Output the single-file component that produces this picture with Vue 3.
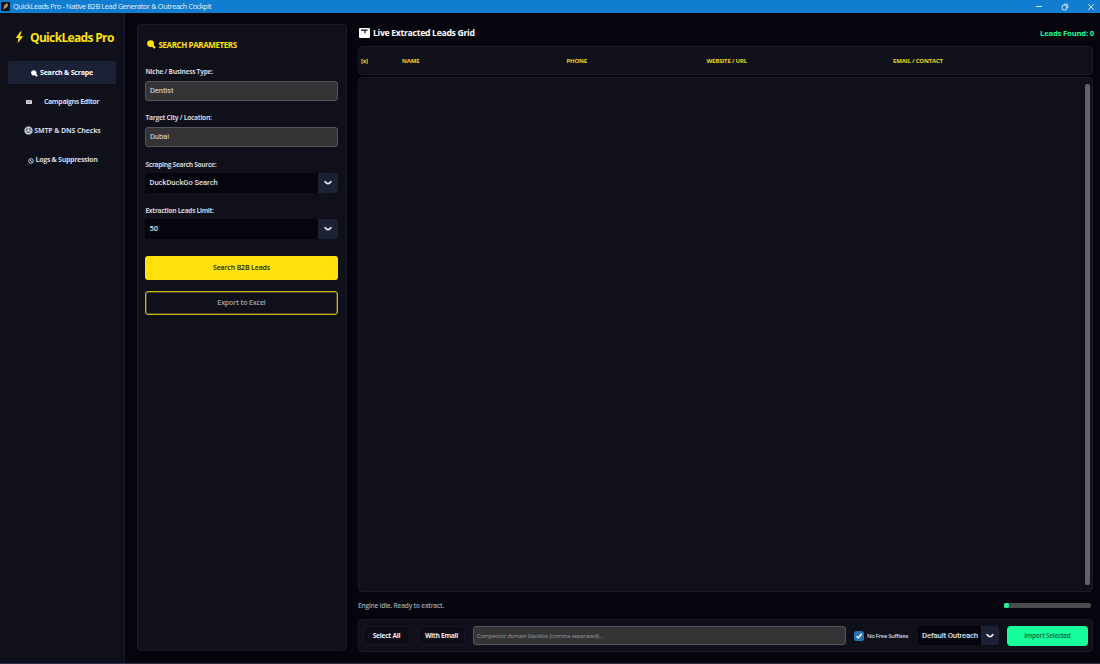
<template>
  <div class="window">
    <header class="titlebar">
      <svg class="app-icon" viewBox="0 0 9 9">
        <rect width="9" height="9" fill="#15130f" />
        <path d="M2.2 7.4 3.2 3.4 5 1.6l2 .2-.4 3-2 1.2z" fill="#a99568" />
      </svg>
      <span class="titlebar-text">QuickLeads Pro - Native B2B Lead Generator &amp; Outreach Cockpit</span>
      <div class="window-controls">
        <svg viewBox="0 0 8 8"><path d="M1 3.5h6" /></svg>
        <svg viewBox="0 0 8 8">
          <rect x="1.2" y="2.2" width="4.4" height="4.6" rx="1" />
          <path d="M2.8 2.2V1.9q0-.8.8-.8h2q1.3 0 1.3 1.3v1.9q0 .8-.8.8h-.5" />
        </svg>
        <svg viewBox="0 0 8 8"><path d="M1.2 1.2l5.6 5.6M6.8 1.2L1.2 6.8" /></svg>
      </div>
    </header>

    <div class="body">
      <aside class="sidebar">
        <div class="brand">
          <svg class="bolt" viewBox="0 0 9 13">
            <path d="M5.3.6.8 7h2.7L2.6 12.3 8.3 5.2H5.1L6.6.6z" fill="#ffe00f" />
          </svg>
          <span>QuickLeads Pro</span>
        </div>
        <nav class="nav">
          <button
            v-for="item in navItems"
            :key="item.id"
            class="nav-item"
            :class="[item.id, { active: activeTab === item.id }]"
            @click="activeTab = item.id"
          >
            <svg v-if="item.id === 'search'" class="icon-lens" viewBox="0 0 10 10">
              <circle cx="4" cy="4" r="3.8" />
              <path d="M6.4 4.6 9.7 8 8.2 9.8 4.6 6.8z" />
            </svg>
            <svg v-else-if="item.id === 'campaigns'" class="icon-mail" viewBox="0 0 6 4">
              <rect width="6" height="4" rx=".4" fill="#d3d5dd" />
              <path d="M1 1l2 1.2L5 1" fill="none" stroke="#686b78" stroke-width=".6" />
            </svg>
            <svg v-else-if="item.id === 'smtp'" class="icon-gear" viewBox="0 0 10 10">
              <circle cx="5" cy="5" r="3.7" fill="#777b86" stroke="#c9ccd5" stroke-width="1.2" />
              <circle cx="5" cy="5" r="4.3" fill="none" stroke="#d6d8df" stroke-width=".9" stroke-dasharray="1.3 .95" />
              <path d="M5 1.5V4M2 6.8 4 5.6M8 6.8 6 5.6" stroke="#d6d8df" stroke-width=".8" />
              <circle cx="5" cy="5" r="1" fill="#f0f1f5" />
            </svg>
            <svg v-else class="icon-ban" viewBox="0 0 6 6">
              <circle cx="3" cy="3" r="2.3" />
              <path d="M1.4 1.4l3.2 3.2" />
            </svg>
            <span>{{ item.label }}</span>
          </button>
        </nav>
      </aside>

      <section class="params">
        <h2 class="params-title">
          <svg class="icon-lens" viewBox="0 0 10 10">
            <circle cx="4" cy="4" r="3.8" />
            <path d="M6.4 4.6 9.7 8 8.2 9.8 4.6 6.8z" />
          </svg>
          <span>SEARCH PARAMETERS</span>
        </h2>

        <label class="field niche">
          <span>Niche / Business Type:</span>
          <input v-model="niche" type="text" />
        </label>
        <label class="field city">
          <span>Target City / Location:</span>
          <input v-model="city" type="text" />
        </label>
        <div class="field source">
          <span>Scraping Search Source:</span>
          <div class="combo">
            <span class="combo-value">{{ source }}</span>
            <span class="combo-arrow"><svg viewBox="0 0 8 6"><path d="M1.2 1.7Q4 5.5 6.8 1.7" /></svg></span>
          </div>
        </div>
        <div class="field limit">
          <span>Extraction Leads Limit:</span>
          <div class="combo">
            <span class="combo-value">{{ limit }}</span>
            <span class="combo-arrow"><svg viewBox="0 0 8 6"><path d="M1.2 1.7Q4 5.5 6.8 1.7" /></svg></span>
          </div>
        </div>

        <button class="btn-search">Search B2B Leads</button>
        <button class="btn-export">Export to Excel</button>
      </section>

      <main class="main">
        <div class="main-head">
          <svg class="grid-icon" viewBox="0 0 11 10">
            <rect width="11" height="10" rx="1.2" fill="#fff" />
            <path d="M2 1.6h6.6v1.1H6.6v2.6H5.4V2.7H2z" fill="#14131c" />
          </svg>
          <h1>Live Extracted Leads Grid</h1>
          <span class="leads-found">Leads Found: {{ leads.length }}</span>
        </div>

        <div class="grid-header">
          <span v-for="col in columns" :key="col">{{ col }}</span>
        </div>
        <div class="grid-body">
          <div class="scrollbar"></div>
        </div>

        <div class="status">
          <span>Engine idle. Ready to extract.</span>
          <div class="progress">
            <div class="progress-fill" :style="{ width: progress + '%' }"></div>
          </div>
        </div>

        <footer class="actions">
          <button class="btn-dark all">Select All</button>
          <button class="btn-dark email">With Email</button>
          <input class="blacklist" type="text" placeholder="Competitor domain blacklist (comma separated)..." />
          <div class="check" @click="noFree = !noFree">
            <svg viewBox="0 0 10 10">
              <rect width="10" height="10" rx="2.8" fill="#2474b4" />
              <path v-if="noFree" d="M2.5 5.2 4.3 7 7.7 2.8" fill="none" stroke="#fff" stroke-width="1.4" />
            </svg>
            <span>No Free Suffixes</span>
          </div>
          <div class="combo template">
            <span class="combo-value">Default Outreach</span>
            <span class="combo-arrow"><svg viewBox="0 0 8 6"><path d="M1.2 1.7Q4 5.5 6.8 1.7" /></svg></span>
          </div>
          <button class="btn-import">Import Selected</button>
        </footer>
      </main>
    </div>
  </div>
</template>

<script setup>
import { ref } from 'vue'

const navItems = [
  { id: 'search', label: 'Search & Scrape' },
  { id: 'campaigns', label: 'Campaigns Editor' },
  { id: 'smtp', label: 'SMTP & DNS Checks' },
  { id: 'logs', label: 'Logs & Suppression' }
]
const columns = ['[x]', 'NAME', 'PHONE', 'WEBSITE / URL', 'EMAIL / CONTACT']

const activeTab = ref('search')
const niche = ref('Dentist')
const city = ref('Dubai')
const source = ref('DuckDuckGo Search')
const limit = ref('50')
const leads = ref([])
const progress = ref(6)
const noFree = ref(true)
</script>

<style>
body {
  background: #06050d;
}
</style>

<style scoped>
* {
  box-sizing: border-box;
}

.window {
  width: 1100px;
  height: 664px;
  display: flex;
  flex-direction: column;
  background: #06050d;
  border-bottom: 1px solid #27324a;
  font-family: "Open Sans", "Noto Sans", sans-serif;
  color: #dfe1ea;
  overflow: hidden;
  white-space: nowrap;
}

button,
input {
  font-family: inherit;
  margin: 0;
  padding: 0;
  border: none;
  outline: none;
}

svg {
  display: block;
  flex: none;
}

.titlebar {
  flex: none;
  height: 13px;
  display: flex;
  align-items: center;
  background: #107dd1;
}

.app-icon {
  width: 9px;
  height: 9px;
  margin-left: 1px;
}

.titlebar-text {
  margin-left: 3px;
  font-size: 7.3px;
  font-weight: 500;
  letter-spacing: -0.35px;
  line-height: 13px;
  color: #e3f1fc;
}

.window-controls {
  margin-left: auto;
  margin-right: 5px;
  display: flex;
  gap: 18px;
}

.window-controls svg {
  width: 8px;
  height: 8px;
  fill: none;
  stroke: #d8e9f8;
  stroke-width: 1;
}

.body {
  flex: 1;
  min-height: 0;
  display: flex;
}

.sidebar {
  flex: none;
  width: 125px;
  padding: 0 8px;
  background: #10101a;
  border-right: 1px solid #191c2f;
}

.brand {
  height: 48px;
  padding-left: 7px;
  display: flex;
  align-items: center;
  font-size: 12px;
  font-weight: 700;
  letter-spacing: -0.66px;
  color: #ffe00f;
}

.bolt {
  width: 9px;
  height: 13px;
  margin-right: 6px;
}

.nav {
  display: flex;
  flex-direction: column;
  gap: 6px;
}

.nav-item {
  height: 23px;
  display: flex;
  align-items: center;
  justify-content: center;
  background: transparent;
  border-radius: 1px;
  font-size: 7px;
  font-weight: 700;
  letter-spacing: -0.2px;
  color: #d3d6e0;
}

.nav-item.active {
  background: #1c2135;
  color: #fff;
}

.nav-item.campaigns {
  padding-left: 1px;
  letter-spacing: -0.38px;
}

.nav-item.smtp {
  padding-left: 1px;
  letter-spacing: -0.15px;
}

.nav-item.logs {
  padding-left: 1px;
  letter-spacing: -0.3px;
}

.icon-lens {
  fill: currentColor;
}

.nav .icon-lens {
  width: 7px;
  height: 7px;
  margin: 1px 2px 0 0;
}

.icon-mail {
  width: 6px;
  height: 4px;
  margin-right: 12px;
}

.icon-gear {
  width: 9px;
  height: 9px;
  margin-right: 1px;
}

.icon-ban {
  width: 6px;
  height: 6px;
  margin: 2px 2px 0 0;
  fill: none;
  stroke: #d3d6e0;
  stroke-width: 0.9;
}

.params {
  flex: none;
  width: 210px;
  margin: 11px 0 12px 12px;
  padding: 9px 8px 0 7px;
  background: #10101a;
  border: 1px solid #191b2b;
  border-radius: 4px;
}

.params-title {
  height: 20px;
  margin: 0 0 9px;
  padding-left: 1.5px;
  display: flex;
  align-items: center;
  font-size: 8px;
  font-weight: 700;
  letter-spacing: -0.41px;
  color: #ffe00f;
}

.params-title .icon-lens {
  width: 9px;
  height: 9px;
  margin-right: 3px;
}

.field {
  display: block;
  height: 38px;
  margin-bottom: 8px;
}

.field > span {
  display: block;
  height: 18px;
  padding-left: 0.5px;
  line-height: 18px;
  font-size: 6.6px;
  font-weight: 700;
  letter-spacing: -0.27px;
  color: #cdd0da;
}

.field.source > span,
.field.limit > span {
  height: 18.4px;
  line-height: 19px;
  letter-spacing: -0.32px;
}

.field input {
  display: block;
  width: 193px;
  height: 20px;
  padding: 0 4px 1px;
  background: #343437;
  border: 1px solid #55565a;
  border-radius: 3px;
  font-family: Roboto, sans-serif;
  font-size: 7.5px;
  letter-spacing: -0.05px;
  color: #dce0e4;
}

.combo {
  display: flex;
  width: 193px;
  height: 20px;
  background: #06050d;
  border-radius: 3px;
  overflow: hidden;
}

.combo-value {
  flex: 1;
  padding-left: 4.5px;
  line-height: 20px;
  font-family: Roboto, sans-serif;
  font-size: 7.5px;
  font-weight: 500;
  color: #dce0e6;
}

.combo-arrow {
  width: 20px;
  display: flex;
  align-items: center;
  justify-content: center;
  background: #1c2135;
}

.combo-arrow svg {
  width: 8px;
  height: 6px;
  fill: none;
  stroke: #e6e8f0;
  stroke-width: 1.8;
  stroke-linecap: round;
}

.btn-search,
.btn-export {
  display: block;
  width: 193px;
  height: 24px;
  border-radius: 3px;
  font-size: 7px;
  font-weight: 600;
}

.btn-search {
  margin-top: 16.5px;
  background: #ffe10d;
  color: #29250c;
  letter-spacing: -0.15px;
}

.btn-export {
  margin-top: 11px;
  background: #10101a;
  border: 1px solid #cdb512;
  box-shadow: inset 0 0 0 0.5px #8f7f14;
  color: #a7a8af;
  letter-spacing: -0.12px;
}

.main {
  flex: 1;
  min-width: 0;
  margin-left: 11px;
  padding-right: 7px;
  display: flex;
  flex-direction: column;
}

.main-head {
  flex: none;
  height: 33px;
  padding: 7px 0 0 1px;
  display: flex;
  align-items: center;
}

.grid-icon {
  width: 11px;
  height: 10px;
  margin-right: 3px;
}

.main-head h1 {
  margin: 0;
  font-size: 8.7px;
  font-weight: 700;
  letter-spacing: -0.32px;
  color: #fff;
}

.leads-found {
  margin: 0 -1px 0 auto;
  font-size: 7.6px;
  font-weight: 700;
  letter-spacing: -0.15px;
  color: #16ff9c;
}

.grid-header {
  flex: none;
  height: 29px;
  padding-left: 2px;
  display: grid;
  grid-template-columns: 41px 164.5px 140px 186.5px 1fr;
  align-items: center;
  background: #10101a;
  border: 1px solid #191b2b;
  border-radius: 4px;
  font-size: 6px;
  font-weight: 700;
  letter-spacing: -0.18px;
  color: #efd414;
}

.grid-body {
  flex: 1;
  min-height: 0;
  margin-top: 2px;
  padding: 6px 2px;
  display: flex;
  justify-content: flex-end;
  background: #10101a;
  border: 1px solid #191b2b;
  border-radius: 4px;
}

.scrollbar {
  width: 5px;
  height: 501px;
  background: #646468;
  border-radius: 2px;
}

.status {
  flex: none;
  height: 27px;
  display: flex;
  align-items: center;
  justify-content: space-between;
  font-size: 6.6px;
  font-weight: 600;
  letter-spacing: -0.2px;
  color: #9aa8b8;
}

.progress {
  width: 87px;
  height: 5px;
  margin-right: 2px;
  background: #4a4a4e;
  border-radius: 2px;
}

.progress-fill {
  height: 5px;
  background: #16ff9c;
  border-radius: 2px;
}

.actions {
  flex: none;
  height: 33px;
  margin-bottom: 11px;
  padding: 0 4px;
  display: flex;
  align-items: center;
  background: #10101a;
  border: 1px solid #191b2b;
  border-radius: 4px;
}

.btn-dark {
  width: 47px;
  height: 19px;
  background: #0d0d17;
  border: 1px solid #161829;
  border-radius: 3px;
  font-size: 6.7px;
  font-weight: 700;
  letter-spacing: -0.28px;
  color: #e9ebf2;
}

.btn-dark.email {
  margin-left: 8px;
}

.blacklist {
  width: 373px;
  height: 19px;
  margin-left: 8px;
  padding: 0 3px;
  background: #343437;
  border: 1px solid #55565a;
  border-radius: 3px;
  font-size: 5.8px;
  letter-spacing: -0.19px;
  color: #ddd;
}

.blacklist::placeholder {
  color: #9a9a9e;
  opacity: 1;
}

.check {
  margin-left: 8px;
  display: flex;
  align-items: center;
  font-size: 5.9px;
  font-weight: 600;
  letter-spacing: -0.32px;
  color: #d5d7df;
}

.check svg {
  width: 10px;
  height: 10px;
  margin-right: 3px;
}

.combo.template {
  width: 81px;
  height: 19px;
  margin-left: auto;
}

.template .combo-value {
  padding-left: 4px;
  line-height: 19px;
  font-size: 7.8px;
  letter-spacing: -0.18px;
}

.template .combo-arrow {
  width: 18px;
}

.btn-import {
  width: 81px;
  height: 20px;
  margin-left: 8px;
  background: #16ff9c;
  border-radius: 4px;
  font-size: 6.4px;
  font-weight: 600;
  letter-spacing: -0.17px;
  color: #0c5f42;
}
</style>
